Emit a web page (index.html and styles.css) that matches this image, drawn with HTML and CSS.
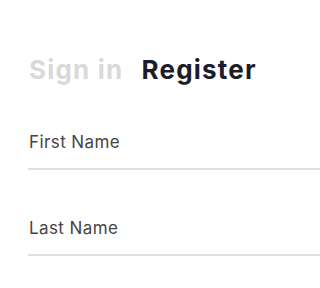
FILE: index.html
```html
<!DOCTYPE html>
<html>
<head>
<meta charset="utf-8">
<link rel="stylesheet" href="styles.css">
</head>
<body>
<div class="auth">
  <div class="tabs">
    <span class="tab tab-inactive">Sign in</span>
    <span class="tab tab-active">Register</span>
  </div>
  <form class="form">
    <label class="field">
      <span class="field-label">First Name</span>
      <span class="field-line"></span>
    </label>
    <label class="field">
      <span class="field-label">Last Name</span>
      <span class="field-line"></span>
    </label>
  </form>
</div>
</body>
</html>
```
FILE: styles.css
```css
html, body {
  margin: 0;
  padding: 0;
  background: #ffffff;
}
body {
  font-family: "Inter", "Noto Sans", sans-serif;
}
.auth {
  padding: 52px 0 0 29px;
}
.tabs {
  display: flex;
  gap: 18px;
  align-items: baseline;
}
.tab {
  font-size: 26px;
  font-weight: 700;
  line-height: 36px;
  letter-spacing: 1.2px;
}
.tab-inactive {
  color: #d9d9d9;
}
.tab-active {
  color: #1c1d2b;
}
.form {
  display: flex;
  flex-direction: column;
  gap: 47px;
  margin: 43px 0 0 0;
}
.field {
  display: flex;
  flex-direction: column;
}
.field-label {
  font-size: 17px;
  color: #454545;
  line-height: 22px;
  letter-spacing: 0.4px;
}
.field-line {
  display: block;
  height: 2px;
  background: #e0e0e0;
  margin-top: 15px;
  margin-left: -1px;
}
```
